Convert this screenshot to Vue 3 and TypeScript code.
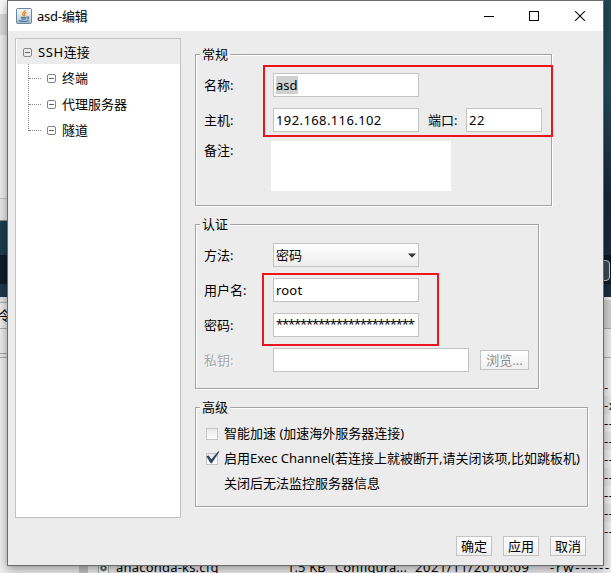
<script setup lang="ts">
import { ref } from 'vue'

const children: string[] = ['终端', '代理服务器', '隧道']
const title = ref('asd-编辑')
const name = ref('asd')
const host = ref('192.168.116.102')
const port = ref('22')
const user = ref('root')
const mask = '*'.repeat(23)
const permissions: string[] = ['-', '-x', '--', '--', '--', '--', '--', '--', '--']
const actions: string[] = ['确定', '应用', '取消']
</script>

<template>
  <div class="desktop">
    <div class="back back-left">
      <i class="l1"></i><i class="l2"></i><i class="l3"></i><i class="l4"></i><i class="l5"></i>
      <i class="l6"></i><i class="l7"></i><i class="l8"></i>
      <span class="peek">令</span>
    </div>
    <div class="back back-right">
      <div class="night"><i class="dim"></i><i class="knob"></i></div>
      <div class="tab"></div>
      <div class="head"></div>
      <div class="perms">
        <div v-for="(p, i) in permissions" :key="i" class="perm">{{ p }}</div>
      </div>
    </div>
    <div class="back back-bottom">
      <i class="scroll"></i>
      <svg class="file" width="11" height="14" viewBox="0 0 11 14">
        <path d="M.5 0v13.5h10V0" fill="#f8f8f8" stroke="#a9a9a9" />
        <circle cx="5.5" cy="5" r="2.2" fill="none" stroke="#526166" stroke-width="1.6" />
        <path d="M5.5 1.5v7M2 5h7M3 2.5l5 5M8 2.5l-5 5" stroke="#526166" stroke-width=".8" />
        <circle cx="5.5" cy="5" r="1.2" fill="#fff" />
      </svg>
      <span class="f-name">anaconda-ks.cfg</span>
      <span class="f-size">1.5 KB</span>
      <span class="f-type">Configura...</span>
      <span class="f-date">2021/11/20 00:09</span>
      <span class="f-perm">-rw-------</span>
    </div>

    <section class="window">
      <header class="titlebar">
        <svg class="java" width="16" height="16" viewBox="0 0 16 16">
          <defs>
            <linearGradient id="jg" x1="0" y1="0" x2="0" y2="1">
              <stop offset="0" stop-color="#f4f7f9" />
              <stop offset=".6" stop-color="#d5dfe7" />
              <stop offset="1" stop-color="#9db3c5" />
            </linearGradient>
          </defs>
          <rect x=".5" y=".5" width="15" height="15" rx="1" fill="url(#jg)" stroke="#6b86a0" />
          <path d="M9.2 2c.4 1.8-3.4 2.6-2.5 4.6.3.6.9 1 1 1.7M10.6 4.4c-1.6.5-2.6 1.3-1.9 2.2.5.7.1 1.2-.4 1.7" fill="none" stroke="#ea8325" stroke-width="1.3" />
          <path d="M4.6 9.1c1.5.6 4.4.6 6.2 0M5.3 10.8c1.3.5 3.6.5 4.9 0M3 12.6c2.6 1.2 7.6 1.1 9.6-.1M11 9c2.6-.5 2.2 1.8.2 2.2" fill="none" stroke="#3e6f9a" stroke-width="1.1" />
        </svg>
        <span class="title">{{ title }}</span>
        <svg class="controls" width="102" height="10" viewBox="0 0 102 10">
          <path d="M0 5.5h10M45.5.5h9v9h-9z" fill="none" stroke="#000" shape-rendering="crispEdges" />
          <path d="M91.2.2l9.6 9.6M100.8.2l-9.6 9.6" stroke="#000" stroke-width="1.1" />
        </svg>
      </header>

      <div class="body">
        <nav class="tree">
          <div class="node root">
            <i class="toggle"></i><span><span class="ssh">SSH</span>连接</span>
          </div>
          <div class="kids">
            <div v-for="c in children" :key="c" class="node kid">
              <i class="branch"></i><i class="toggle"></i><span>{{ c }}</span>
            </div>
          </div>
        </nav>

        <div class="panels">
          <section class="group general">
            <h2>常规</h2>
            <div class="row">
              <label>名称:</label>
              <div class="field"><span class="sel">{{ name }}</span></div>
            </div>
            <div class="row">
              <label>主机:</label>
              <div class="field"><span class="ip">{{ host }}</span></div>
              <label class="port-label">端口:</label>
              <div class="field port">{{ port }}</div>
            </div>
            <div class="row note">
              <label>备注:</label>
              <div class="memo"></div>
            </div>
            <div class="mark mark-a"></div>
          </section>

          <section class="group auth">
            <h2>认证</h2>
            <div class="row">
              <label>方法:</label>
              <div class="field combo">
                <span>密码</span>
                <svg width="8" height="5" viewBox="0 0 8 5"><path d="M0 .5h8L4 4.8z" fill="#333" /></svg>
              </div>
            </div>
            <div class="row">
              <label>用户名:</label>
              <div class="field"><span class="user">{{ user }}</span></div>
            </div>
            <div class="row">
              <label>密码:</label>
              <div class="field"><span class="stars">{{ mask }}</span></div>
            </div>
            <div class="row">
              <label class="off">私钥:</label>
              <div class="field key"></div>
              <button class="btn browse" disabled>浏览...</button>
            </div>
            <div class="mark mark-b"></div>
          </section>

          <section class="group advanced">
            <h2>高级</h2>
            <div class="check"><i class="box"></i><span>智能加速 (加速海外服务器连接)</span></div>
            <div class="check">
              <i class="box">
                <svg class="tick" width="14" height="13" viewBox="0 0 14 13">
                  <path d="M.3 5.3l2.4-.7 2.6 3.6L12.3.2l1.2.4L5.8 12.2H4.6z" fill="#2b4763" />
                </svg>
              </i>
              <span>启用Exec Channel(若连接上就被断开,请关闭该项,比如跳板机)</span>
            </div>
            <div class="check hint"><span>关闭后无法监控服务器信息</span></div>
          </section>
        </div>
      </div>

      <footer class="actions">
        <button v-for="a in actions" :key="a" class="btn">{{ a }}</button>
      </footer>
    </section>
  </div>
</template>

<style>
body {
  overflow: hidden;
}
</style>

<style scoped>
* {
  box-sizing: border-box;
}
i {
  display: block;
  font-style: normal;
}
.desktop {
  position: relative;
  width: 611px;
  height: 573px;
  overflow: hidden;
  background: #f0f0f0;
  font: 13px/20px "Noto Sans", "Noto Sans CJK SC", sans-serif;
  color: #000;
  white-space: nowrap;
}
.back {
  position: absolute;
  overflow: hidden;
}
.back-left {
  left: 0;
  top: 0;
  width: 8px;
  height: 573px;
  display: flex;
  flex-direction: column;
}
.back-left i {
  flex: none;
}
.l1 { height: 14px; background: #fafafa; }
.l2 { height: 21px; background: #dcdcdc; }
.l3 { height: 164px; background: #f0f0f0; border-bottom: 1px solid #c6c6c6; }
.l4 { height: 22px; background: #e9e9e9; border-bottom: 1px solid #8c8c8c; }
.l5 { height: 76px; background: linear-gradient(#1d3b50 0 34px, #0e1d2b 34px 63px, #1d384d 63px); }
.l6 { height: 6px; background: #e4e4e4; border-bottom: 1px solid #aaa; }
.l7 { height: 26px; background: #ededed; border-bottom: 1px solid #aaa; }
.l8 { height: 29px; background: #ededed; border-bottom: 1px solid #aaa; box-shadow: inset 0 -3px #ededed, inset 0 -4px #aaa; }
.peek {
  position: absolute;
  left: -2px;
  top: 305px;
}
.back-right {
  left: 603px;
  top: 0;
  width: 8px;
  height: 573px;
}
.night {
  position: relative;
  height: 297px;
  background: linear-gradient(#24475b, #254a60 90px, #16283c 200px, #1a2e43 297px);
}
.dim {
  position: absolute;
  left: 0;
  top: 255px;
  width: 8px;
  height: 29px;
  background: #0d1a27;
}
.knob {
  position: absolute;
  left: -8px;
  top: 260px;
  width: 15px;
  height: 21px;
  border: 1px solid #ccc;
  border-radius: 4px;
  background: #3d4a55;
}
.tab {
  height: 32px;
  background: #d2d2d2;
  border-top: 3px solid #eee;
  border-bottom: 1px solid #aaa;
}
.head {
  height: 29px;
  background: #ededed;
  border-bottom: 1px solid #b5b5b5;
}
.perms {
  padding-top: 20px;
}
.perm {
  height: 18px;
  padding-left: 1px;
  line-height: 18px;
  letter-spacing: .6px;
}
.perm:nth-child(even) {
  background: #e7e7e7;
}
.back-bottom {
  left: 8px;
  top: 560px;
  width: 603px;
  height: 13px;
  background: #eee;
  font-size: 13px;
  line-height: 16px;
}
.back-bottom > * {
  position: absolute;
  top: -1px;
}
.back-bottom .scroll { top: 0; left: 71px; width: 9px; height: 13px; background: #c4c4c4; }
.back-bottom .file { left: 90px; top: 3px; }
.f-name { left: 108px; letter-spacing: .2px; }
.f-size { left: 279px; letter-spacing: .1px; }
.f-type { left: 327px; letter-spacing: .1px; }
.f-date { left: 407px; letter-spacing: .55px; }
.f-perm { left: 542px; letter-spacing: 1.8px; }
.window {
  position: absolute;
  left: 7px;
  top: 0;
  width: 597px;
  height: 566px;
  display: flex;
  flex-direction: column;
  background: #ececec;
  border: 1px solid #6b6d6c;
  box-shadow: 0 3px 10px rgba(0, 0, 0, .4);
}
.titlebar {
  display: flex;
  align-items: center;
  height: 30px;
  flex: none;
  padding: 0 17px 0 8px;
  background: #fff;
}
.title {
  margin: -1px auto 0 5px;
  letter-spacing: -.2px;
}
.controls {
  margin-top: -1px;
}
.body {
  display: flex;
  gap: 14px;
  padding: 7px 15px 0 7px;
}
.tree {
  width: 166px;
  height: 480px;
  flex: none;
  background: #fff;
  border: 1px solid #c3c3c3;
}
.node {
  display: flex;
  align-items: center;
}
.root {
  height: 25px;
  margin-left: 1px;
  padding: 1px 0 0 6px;
  background: #ececec;
}
.ssh {
  letter-spacing: .6px;
}
.toggle {
  width: 9px;
  height: 9px;
  margin-right: 6px;
  border: 1px solid #858585;
  border-radius: 2px;
  background: linear-gradient(#666, #666) center / 5px 1px no-repeat;
}
.kids {
  margin-left: 12px;
  height: 67px;
  border-left: 1px dotted #888;
}
.kid {
  height: 26px;
  padding-top: 2px;
}
.branch {
  width: 12px;
  height: 1px;
  margin-right: 6px;
  border-top: 1px dotted #888;
}
.panels {
  display: flex;
  flex-direction: column;
  align-items: flex-start;
  padding-top: 16px;
}
.group {
  position: relative;
  border: 1px solid #a3a3a3;
  box-shadow: 1px 1px #fff, inset 1px 1px #fff;
  padding: 18px 0 0 8px;
}
.group h2 {
  position: absolute;
  left: 4px;
  top: -11px;
  margin: 0;
  padding: 0 2px;
  background: #ececec;
  font: inherit;
}
.general { width: 357px; height: 152px; }
.auth { width: 344px; height: 165px; margin-top: 18px; }
.advanced { width: 393px; height: 100px; margin-top: 18px; padding: 16px 0 0 10px; }
.row {
  display: flex;
  align-items: center;
  height: 24px;
  margin-bottom: 11px;
}
.row label {
  width: 69px;
  margin-top: -1px;
}
.row .port-label {
  width: 38px;
  margin-left: 9px;
}
.off {
  color: #a6a6a6;
  text-shadow: 1px 1px #fff;
}
.note {
  align-items: flex-start;
  height: 50px;
  margin-top: -2px;
}
.note label {
  width: 67px;
}
.memo {
  width: 180px;
  height: 50px;
  background: #fff;
}
.field {
  display: flex;
  align-items: center;
  width: 146px;
  height: 24px;
  padding: 0 2px;
  border: 1px solid #c3c3c3;
  background: #fff;
}
.sel {
  height: 18px;
  line-height: 18px;
  background: #cfcfcf;
}
.ip { letter-spacing: .4px; }
.user { letter-spacing: .2px; }
.stars { letter-spacing: -1.18px; margin-top: -2px; }
.field.port { width: 76px; letter-spacing: .5px; }
.field.key { width: 196px; }
.combo {
  justify-content: space-between;
  background: linear-gradient(#fff, #ededed);
}
.combo span {
  margin-top: -1px;
}
.combo svg {
  margin-top: 1px;
}
.btn {
  width: 36px;
  height: 20px;
  padding: 0;
  border: 1px solid #c3c3c3;
  background: linear-gradient(#fff, #f0f0f0);
  color: #000;
  font: inherit;
  line-height: 17px;
}
.browse {
  width: 49px;
  margin-left: 11px;
  color: #8e8e8e;
}
.mark {
  position: absolute;
  border: 2px solid #ee141e;
}
.mark-a { left: 67px; top: 10px; width: 290px; height: 72px; }
.mark-b { left: 66px; top: 48px; width: 177px; height: 73px; }
.check {
  display: flex;
  align-items: center;
  height: 20px;
  margin-bottom: 5px;
}
.check > span {
  margin-top: -3px;
}
.box {
  position: relative;
  width: 12px;
  height: 12px;
  margin: -1px 6px 0 0;
  border: 1px solid #c3c3c3;
  background: linear-gradient(#e8e8e8, #fff);
}
.tick {
  position: absolute;
  left: -1px;
  top: -3px;
}
.hint {
  padding-left: 18px;
}
.actions {
  display: flex;
  justify-content: flex-end;
  gap: 11px;
  padding: 18px 17px 0 0;
}
</style>
